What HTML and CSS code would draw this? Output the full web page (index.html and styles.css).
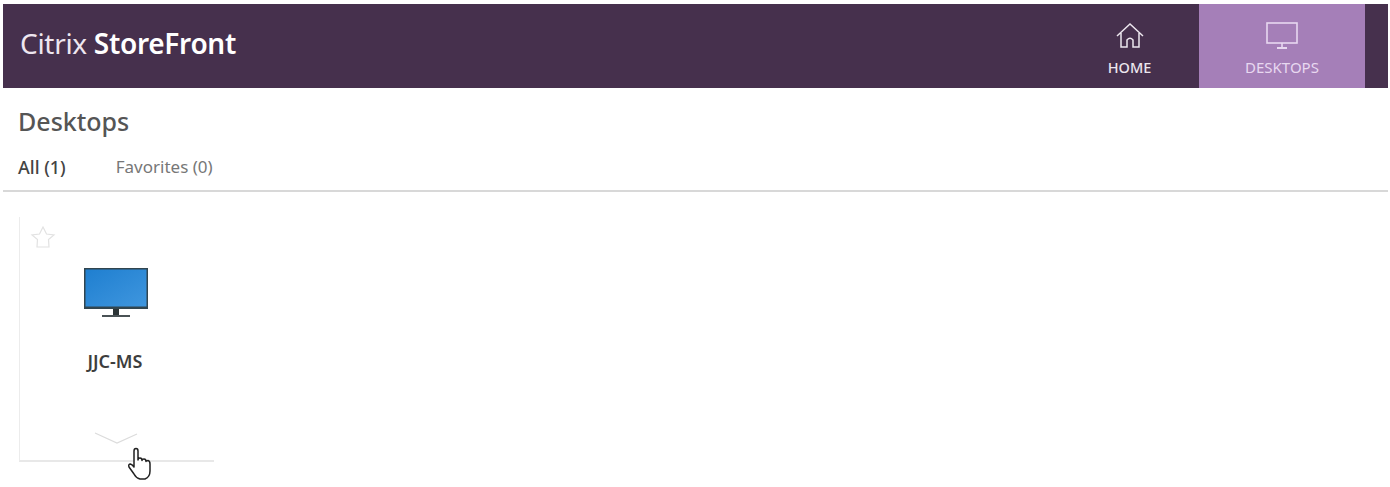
FILE: index.html
```html
<!DOCTYPE html>
<html lang="en">
  <head>
    <meta charset="UTF-8" />
    <title>Citrix StoreFront</title>
    <link rel="stylesheet" href="styles.css">
  </head>
  <body>
    <header class="topbar">
      <div class="brand">Citrix <strong>StoreFront</strong></div>
      <nav class="nav">
        <a class="nav-item">
          <svg class="nav-icon" width="30" height="30" viewBox="0 0 30 30" fill="none" stroke="currentColor" stroke-width="1.5">
            <path d="M2 15 L15 3 L28 15 M24 12 V26 H18 V19 Q15 15.5 12 19 V26 H6 V12" />
          </svg>
          <span>HOME</span>
        </a>
        <a class="nav-item active">
          <svg class="nav-icon" width="34" height="30" viewBox="0 0 34 30" fill="none" stroke="currentColor" stroke-width="1.6">
            <rect x="2" y="2" width="30" height="20" />
            <path d="M17 22 V26" />
            <path d="M12 27 H22" stroke-width="2" />
          </svg>
          <span>DESKTOPS</span>
        </a>
      </nav>
    </header>

    <main class="content">
      <h1>Desktops</h1>
      <div class="tabs">
        <div class="tab active">All (1)</div>
        <div class="tab">Favorites (0)</div>
      </div>

      <div class="card">
        <svg class="star" width="28" height="26" viewBox="0 0 28 26" fill="none" stroke="#e2e2e2" stroke-width="1.2">
          <path d="M14 3 L17.5 10 L25 11 L19.5 15.5 L20 23 H8 L8.5 15.5 L3 11 L10.5 10 Z" />
        </svg>
        <svg class="monitor" width="64" height="52" viewBox="0 0 64 52">
          <defs>
            <linearGradient id="screen" x1="0" y1="0" x2="1" y2="1">
              <stop offset="0" stop-color="#1f7fd0" />
              <stop offset="1" stop-color="#3f96de" />
            </linearGradient>
          </defs>
          <rect x="0" y="0" width="64" height="41" fill="#31454f" />
          <rect x="1.5" y="1.5" width="61" height="37" fill="url(#screen)" />
          <rect x="29" y="41" width="6" height="6" fill="#2c3436" />
          <rect x="18" y="47" width="28" height="2" fill="#4a5255" />
        </svg>
        <div class="card-name">JJC-MS</div>
        <svg class="chevron" width="46" height="14" viewBox="0 0 46 14" fill="none" stroke="#dcdcdc" stroke-width="1.2">
          <path d="M2 2 L24 12 L44 3" />
        </svg>
      </div>
    </main>

    <svg class="cursor" width="26" height="34" viewBox="0 0 26 34" fill="#fff" stroke="#222" stroke-width="1.5" stroke-linejoin="round">
      <path d="M7 20 V4 Q7 1.5 9 1.5 Q11 1.5 11 4 V13 Q11 11 13 11 Q15 11 15 13.5 Q15 12 17 12 Q19 12 19 14.5 Q19 13.5 21 13.5 Q23 14 23 17 V24 Q23 30 18 32 H13 Q9 31 7 27 L2 20 Q1 17 3.5 17 Q5.5 17.5 7 20 Z" />
    </svg>
  </body>
</html>
```

FILE: styles.css
```css
html, body {
  height: 100%;
}
body {
  font-family: "Noto Sans", "Open Sans", sans-serif;
  margin: 0;
  padding: 4px 2px 0 3px;
  box-sizing: border-box;
  position: relative;
  overflow: hidden;
  color: #444;
  background-color: white;
}
.topbar {
  background-color: #46304d;
  height: 84px;
  display: flex;
  align-items: center;
  justify-content: space-between;
  padding-left: 17px;
  padding-right: 23px;
}
.brand {
  font-size: 28px;
  color: #eee6f0;
  letter-spacing: -0.3px;
  margin-top: -6px;
}
.brand strong {
  color: white;
  font-weight: 600;
}
.nav {
  display: flex;
  height: 100%;
}
.nav-item {
  display: flex;
  flex-direction: column;
  align-items: center;
  justify-content: center;
  gap: 6px;
  color: #ece6ee;
  font-size: 14.5px;
  font-weight: 500;
  line-height: 20px;
  width: 69px;
  margin-right: 35px;
  padding-top: 6px;
}
.nav-item.active {
  width: 166px;
  margin-right: 0;
  background-color: #a57fb8;
  color: #e8d8f0;
  font-size: 15px;
  font-weight: 400;
}
.nav-icon {
  display: block;
}
.content {
  padding: 0 0 0 15px;
}
h1 {
  font-size: 25px;
  font-weight: 500;
  color: #555;
  margin: 17px 0 0 0;
  line-height: 32px;
}
.tabs {
  display: flex;
  gap: 50px;
  margin: 18px 0 0 -15px;
  padding: 0 0 11px 15px;
  border-bottom: 2px solid #d8d8d8;
  font-size: 17px;
  line-height: 24px;
}
.tab {
  color: #777;
}
.tab.active {
  color: #444;
  font-weight: 500;
  font-size: 18px;
}
.card {
  width: 194px;
  height: 243px;
  margin: 25px 0 0 1px;
  border-left: 1px solid #ececec;
  border-bottom: 2px solid #e8e8e8;
  display: flex;
  flex-direction: column;
  align-items: center;
}
.star {
  align-self: flex-start;
  margin: 7px 0 0 9px;
}
.monitor {
  margin-top: 18px;
  margin-left: -3px;
}
.card-name {
  font-size: 18px;
  font-weight: 600;
  color: #3d3d3d;
  margin-top: 29px;
  margin-left: -4px;
  line-height: 24px;
}
.chevron {
  margin-top: 58px;
  margin-left: -2px;
}
.cursor {
  position: absolute;
  left: 127px;
  top: 447px;
}
```
